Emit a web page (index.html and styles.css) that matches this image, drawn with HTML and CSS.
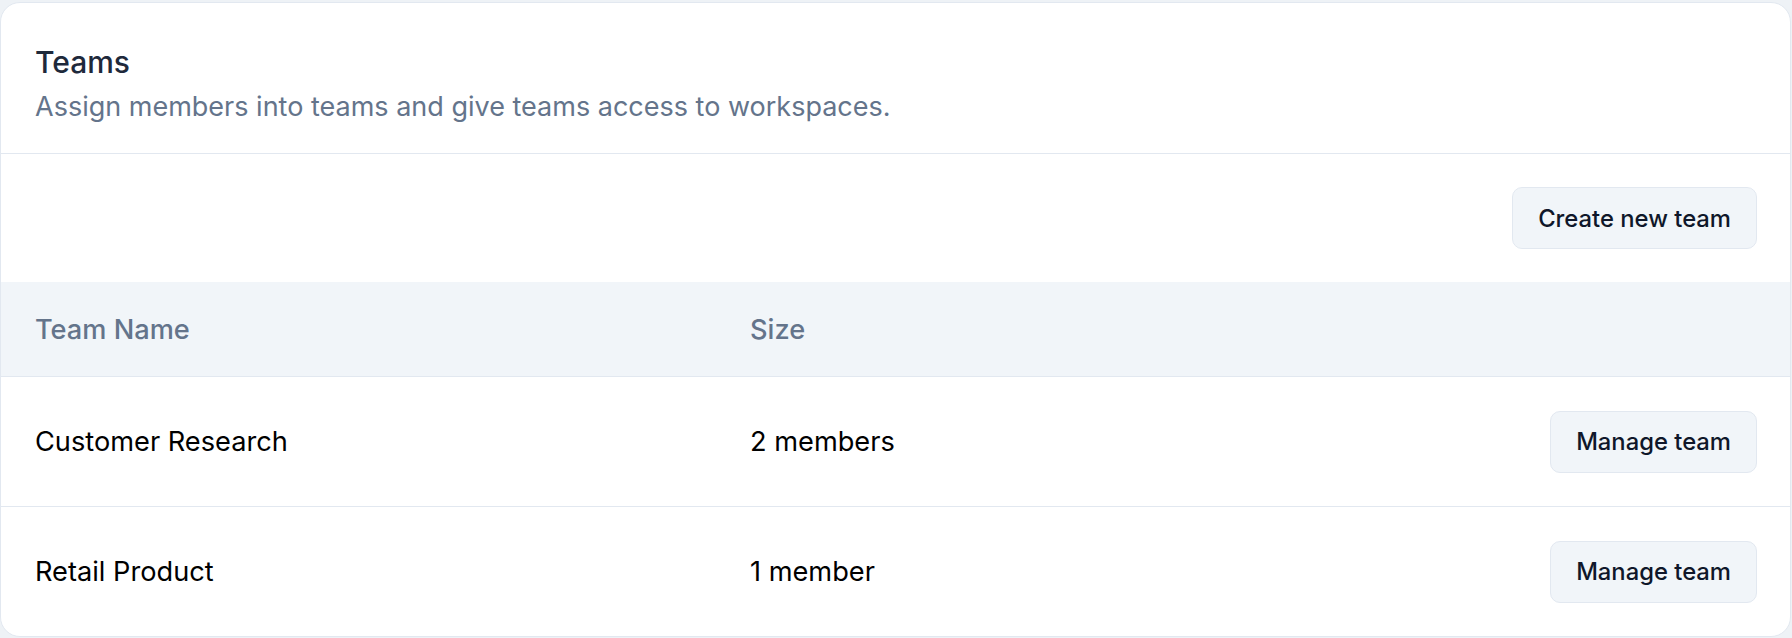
FILE: index.html
```html
<!DOCTYPE html>
<html>
<head>
	<meta charset="utf-8">
	<title>Teams</title>
	<link rel="stylesheet" href="styles.css">
</head>
<body>

<section class="card">
	<header class="card-header">
		<h2>Teams</h2>
		<p>Assign members into teams and give teams access to workspaces.</p>
	</header>

	<div class="toolbar">
		<button class="btn">Create new team</button>
	</div>

	<div class="teams">
		<div class="row head">
			<div class="cell">Team Name</div>
			<div class="cell">Size</div>
			<div class="cell"></div>
		</div>
		<div class="row">
			<div class="cell">Customer Research</div>
			<div class="cell">2 members</div>
			<div class="cell action"><button class="btn">Manage team</button></div>
		</div>
		<div class="row">
			<div class="cell">Retail Product</div>
			<div class="cell">1 member</div>
			<div class="cell action"><button class="btn">Manage team</button></div>
		</div>
	</div>
</section>

</body>
</html>
```

FILE: styles.css
```css
body {
	margin: 0;
	padding: 2px 1px 0 0;
	background-color: #eef2f6;
	font-family: 'Inter', 'Liberation Sans', sans-serif;
	color: #000;
}

.card {
	background-color: #fff;
	border: 1px solid #e2e8f0;
	border-radius: 20px;
	overflow: hidden;
}

.card-header {
	padding: 35px 34px 26px;
	border-bottom: 1px solid #e2e8f0;
}

.card-header h2 {
	margin: 0;
	font-size: 30px;
	line-height: 48px;
	font-weight: 500;
	color: #1e293b;
}

.card-header p {
	margin: 0;
	font-size: 27px;
	line-height: 41px;
	color: #64748b;
}

.toolbar {
	display: flex;
	justify-content: flex-end;
	padding: 33px 33px 33px;
}

.btn {
	height: 62px;
	padding: 0 25px;
	border: 1px solid #e2e8f0;
	border-radius: 10px;
	background-color: #f1f5f9;
	font-family: inherit;
	font-size: 23.8px;
	font-weight: 500;
	color: #0f172a;
}

.row {
	display: grid;
	grid-template-columns: 715px 1fr auto;
	align-items: center;
	height: 129px;
	border-bottom: 1px solid #e2e8f0;
	font-size: 27.2px;
	line-height: 41px;
}

.row:last-child {
	border-bottom: 0;
}

.row.head {
	height: 94px;
	background-color: #f1f5f9;
	color: #64748b;
	font-weight: 500;
}

.cell {
	padding-left: 34px;
}

.cell.action {
	padding: 0 33px 0 0;
}
```
